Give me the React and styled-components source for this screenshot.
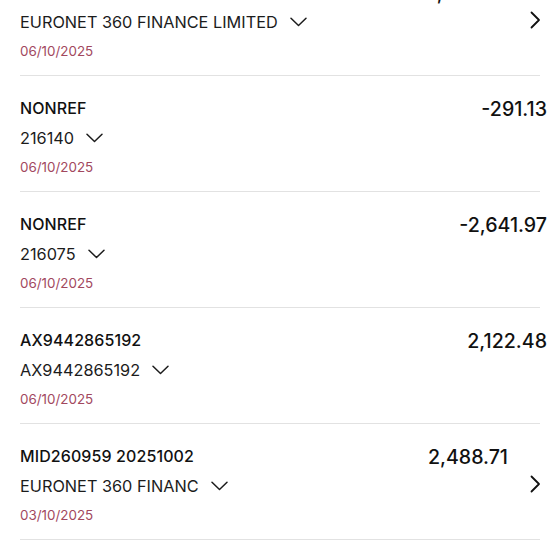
import React from "react";
import styled, { createGlobalStyle } from "styled-components";

const Global = createGlobalStyle`
  html, body { margin: 0; padding: 0; background: #ffffff; }
  body { font-family: Inter, "Noto Sans", "Liberation Sans", sans-serif; overflow: hidden; }
`;

const List = styled.div`
  width: 560px;
  height: 560px;
  overflow: hidden;
  display: flex;
  flex-direction: column;
`;

const Scroller = styled.div`
  margin-top: -40px;
  display: flex;
  flex-direction: column;
`;

const Item = styled.div`
  display: flex;
  flex-direction: column;
`;

const Row = styled.div`
  display: flex;
  align-items: flex-start;
  padding: 22px ${(p) => (p.$nav ? "12px" : "13px")} 14px 20px;
`;

const Left = styled.div`
  flex: 1;
  display: flex;
  flex-direction: column;
  min-width: 0;
`;

const Title = styled.div`
  font-size: 16px;
  line-height: 20px;
  font-weight: 500;
  color: #111;
  letter-spacing: 0.1px;
`;

const Sub = styled.div`
  margin-top: 10px;
  display: flex;
  align-items: center;
  gap: 12px;
  font-size: 16.3px;
  line-height: 20px;
  color: #1c1c1c;
`;

const DateText = styled.div`
  margin-top: 9px;
  font-size: 13.4px;
  line-height: 20px;
  color: #a2485e;
`;

const Amount = styled.div`
  font-size: 19.6px;
  line-height: 20px;
  font-weight: 500;
  color: #111;
  white-space: nowrap;
  margin-top: 1px;
`;

const Nav = styled.div`
  align-self: center;
  width: 26px;
  margin-left: 14px;
  margin-top: -3px;
  display: flex;
  justify-content: center;
`;

const Divider = styled.div`
  height: 1px;
  margin: 0 20px;
  background: #e2e2e2;
`;

const ChevronDown = () => (
  <svg width="17" height="10" viewBox="0 0 17 10" fill="none">
    <path d="M1 1.2 L8.5 8.5 L16 1.2" stroke="#1c1c1c" strokeWidth="1.5" strokeLinecap="round" strokeLinejoin="round" />
  </svg>
);

const ChevronRight = () => (
  <svg width="11" height="18" viewBox="0 0 11 18" fill="none">
    <path d="M1.5 1.5 L9 9 L1.5 16.5" stroke="#111" strokeWidth="1.8" strokeLinecap="round" strokeLinejoin="round" />
  </svg>
);

const data = [
  { title: "MID260959 20251002", sub: "EURONET 360 FINANCE LIMITED", date: "06/10/2025", amount: "1,276.00", nav: true },
  { title: "NONREF", sub: "216140", date: "06/10/2025", amount: "-291.13" },
  { title: "NONREF", sub: "216075", date: "06/10/2025", amount: "-2,641.97" },
  { title: "AX9442865192", sub: "AX9442865192", date: "06/10/2025", amount: "2,122.48" },
  { title: "MID260959 20251002", sub: "EURONET 360 FINANC", date: "03/10/2025", amount: "2,488.71", nav: true },
];

export default function App() {
  return (
    <List>
      <Global />
      <Scroller>
        {data.map((d, i) => (
          <Item key={i}>
            <Row $nav={d.nav}>
              <Left>
                <Title>{d.title}</Title>
                <Sub>
                  <span>{d.sub}</span>
                  <ChevronDown />
                </Sub>
                <DateText>{d.date}</DateText>
              </Left>
              <Amount>{d.amount}</Amount>
              {d.nav && (
                <Nav>
                  <ChevronRight />
                </Nav>
              )}
            </Row>
            <Divider />
          </Item>
        ))}
      </Scroller>
    </List>
  );
}
